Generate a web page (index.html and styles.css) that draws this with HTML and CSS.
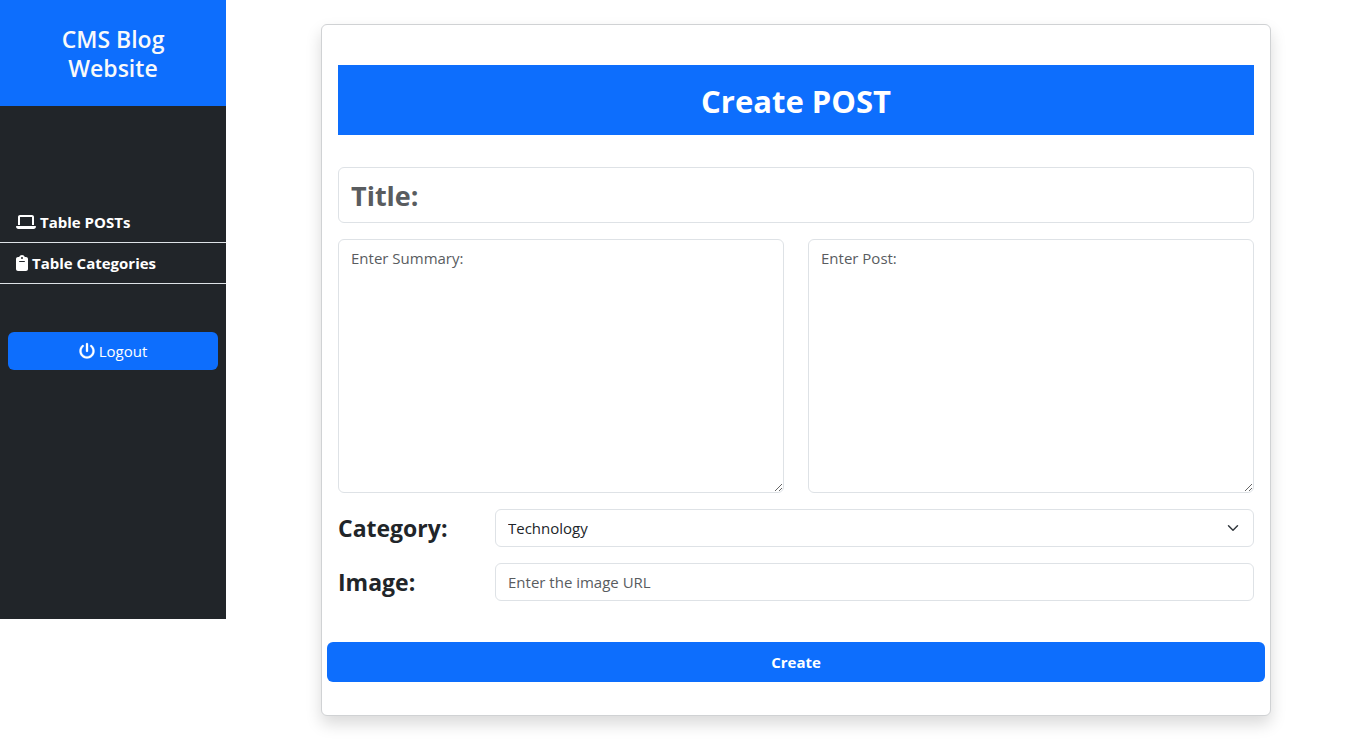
FILE: index.html
```html
<!DOCTYPE html>
<html lang="en">
<head>
<meta charset="utf-8">
<meta name="viewport" content="width=device-width, initial-scale=1">
<title>Create POST</title>
<link rel="stylesheet" href="styles.css">
</head>
<body>
<div class="layout">
  <aside class="sidebar">
    <h4 class="brand">CMS Blog<br>Website</h4>
    <nav class="menu">
      <a class="menu-link" href="#posts">
        <svg class="icon icon-laptop" viewBox="0 0 640 512" aria-hidden="true"><path d="M128 32C92.7 32 64 60.7 64 96V352h64V96H512V352h64V96c0-35.3-28.7-64-64-64H128zM19.2 384C8.6 384 0 392.6 0 403.2C0 445.6 34.4 480 76.8 480H563.2c42.4 0 76.8-34.4 76.8-76.8c0-10.6-8.6-19.2-19.2-19.2H19.2z"/></svg>
        <span>Table POSTs</span>
      </a>
      <a class="menu-link" href="#categories">
        <svg class="icon icon-clipboard" viewBox="0 0 384 512" aria-hidden="true"><path d="M192 0c-41.8 0-77.4 26.7-90.5 64H64C28.7 64 0 92.7 0 128V448c0 35.3 28.7 64 64 64H320c35.3 0 64-28.7 64-64V128c0-35.3-28.7-64-64-64H282.5C269.4 26.7 233.8 0 192 0zm0 64a32 32 0 1 1 0 64 32 32 0 1 1 0-64zM112 192H272c8.8 0 16 7.2 16 16s-7.2 16-16 16H112c-8.8 0-16-7.2-16-16s7.2-16 16-16z"/></svg>
        <span>Table Categories</span>
      </a>
    </nav>
    <button class="logout" type="button">
      <svg class="icon icon-power" viewBox="0 0 512 512" aria-hidden="true"><path d="M288 32c0-17.7-14.3-32-32-32s-32 14.3-32 32V256c0 17.7 14.3 32 32 32s32-14.3 32-32V32zM143.5 120.6c13.6-11.3 15.4-31.5 4.1-45.1s-31.5-15.4-45.1-4.1C49.7 115.4 16 181.8 16 256c0 132.5 107.5 240 240 240s240-107.5 240-240c0-74.2-33.8-140.6-86.6-184.6c-13.6-11.3-33.8-9.4-45.1 4.1s-9.4 33.8 4.1 45.1c38.9 32.3 63.5 81 63.5 135.4c0 97.2-78.8 176-176 176s-176-78.8-176-176c0-54.4 24.7-103.1 63.5-135.4z"/></svg>
      <span>Logout</span>
    </button>
  </aside>
  <main class="content">
    <form class="card">
      <h2 class="card-title">Create POST</h2>
      <div class="fields">
        <input class="control control-title" type="text" placeholder="Title:" aria-label="Title">
        <div class="text-row">
          <textarea class="control control-area" placeholder="Enter Summary:" aria-label="Summary"></textarea>
          <textarea class="control control-area" placeholder="Enter Post:" aria-label="Post"></textarea>
        </div>
        <div class="field-row">
          <label class="field-label" for="category">Category:</label>
          <select class="control control-select" id="category"><option>Technology</option></select>
        </div>
        <div class="field-row">
          <label class="field-label" for="image">Image:</label>
          <input class="control" id="image" type="text" placeholder="Enter the image URL">
        </div>
      </div>
      <button class="submit" type="submit">Create</button>
    </form>
  </main>
</div>
</body>
</html>
```
FILE: styles.css
```css
*, *::before, *::after { box-sizing: border-box; }

body {
  margin: 0;
  font-family: "Open Sans", "Noto Sans", sans-serif;
  font-size: 15px;
  line-height: 24px;
  color: #212529;
  background: #fff;
}

.layout {
  display: flex;
  align-items: flex-start;
}

.sidebar {
  flex: 0 0 226px;
  padding-bottom: 249px;
  color: #fff;
  background: #212529;
}

.brand {
  margin: 0 0 96px;
  padding: 25px 16px 23px;
  font-size: 23px;
  font-weight: 600;
  line-height: 29px;
  text-align: center;
  color: #f8f9fa;
  background: #0d6efd;
}

.menu-link {
  display: flex;
  align-items: center;
  gap: 4px;
  padding: 8px 16px;
  border-bottom: 1px solid #dee2e6;
  font-weight: 700;
  color: #fff;
  text-decoration: none;
}

.icon {
  flex: none;
  height: 16px;
  fill: currentColor;
}

.icon-laptop { width: 20px; }
.icon-clipboard { width: 12px; }

.icon-power {
  width: 16px;
  overflow: visible;
  stroke: currentColor;
  stroke-width: 10;
}

.logout {
  display: flex;
  align-items: center;
  justify-content: center;
  gap: 4px;
  width: calc(100% - 16px);
  margin: 48px 8px 0;
  padding: 7px 12px;
  border: 0;
  border-radius: 6px;
  font: inherit;
  color: #fff;
  background: #0d6efd;
}

.content {
  flex: 1;
  min-width: 0;
  padding: 24px 0;
}

.card {
  width: calc(100% * 10 / 12);
  margin: 0 auto;
  padding: 40px 0 33px;
  border: 1px solid #d0d2d4;
  border-radius: 6px;
  background: #fff;
  box-shadow: 0 8px 16px rgba(0, 0, 0, 0.15);
}

.card-title {
  margin: 0 16px 32px;
  padding: 17px 16px 15px;
  font-size: 31px;
  font-weight: 700;
  line-height: 38px;
  text-align: center;
  color: #fff;
  background: #0d6efd;
}

.fields {
  display: flex;
  flex-direction: column;
  gap: 16px;
  padding: 0 16px;
}

.control {
  display: block;
  width: 100%;
  min-width: 0;
  height: 38px;
  margin: 0;
  padding: 6px 12px;
  border: 1px solid #dee2e6;
  border-radius: 6px;
  font: inherit;
  color: #212529;
  background-color: #fff;
}

.control::placeholder {
  color: #595c5f;
  opacity: 1;
}

.control-title {
  height: 56px;
  font-size: 27px;
  font-weight: 700;
}

.text-row {
  display: grid;
  grid-template-columns: 1fr 1fr;
  gap: 24px;
}

.control-area {
  height: 254px;
  resize: vertical;
}

.control-select {
  appearance: none;
  padding-right: 36px;
  background-image: url("data:image/svg+xml,%3Csvg xmlns='http://www.w3.org/2000/svg' viewBox='0 0 16 16'%3E%3Cpath fill='none' stroke='%23343a40' stroke-linecap='round' stroke-linejoin='round' stroke-width='2' d='m2 5 6 6 6-6'/%3E%3C/svg%3E");
  background-repeat: no-repeat;
  background-position: right 12px center;
  background-size: 16px 12px;
}

.field-row {
  display: grid;
  grid-template-columns: 133px minmax(0, 1fr);
  align-items: center;
  gap: 24px;
}

.field-label {
  font-size: 23px;
  font-weight: 700;
  line-height: 29px;
}

.submit {
  display: block;
  width: calc(100% - 10px);
  margin: 41px auto 0;
  padding: 8px 12px;
  border: 0;
  border-radius: 6px;
  font: inherit;
  font-weight: 700;
  color: #fff;
  background: #0d6efd;
}
```
